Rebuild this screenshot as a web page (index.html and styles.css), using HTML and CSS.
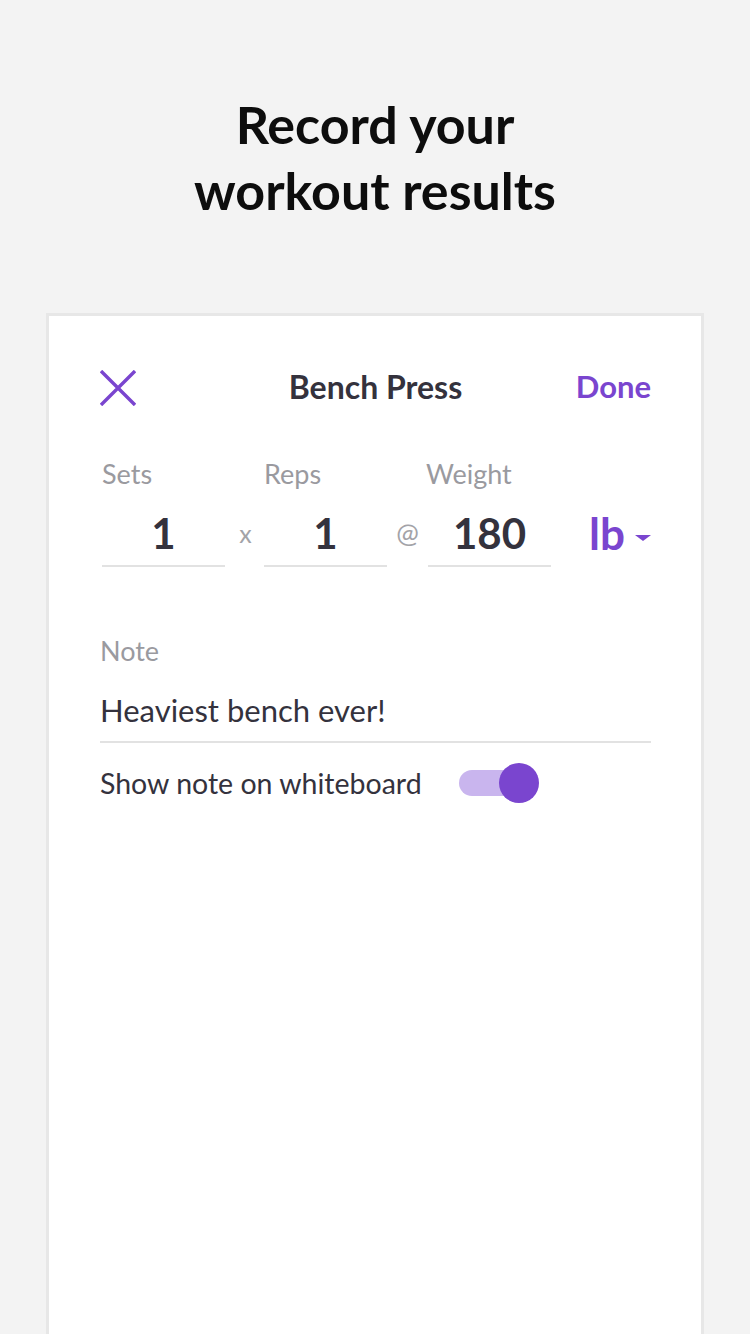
FILE: index.html
```html
<!DOCTYPE html>
<html lang="en">
<head>
<meta charset="utf-8">
<title>Record your workout results</title>
<link rel="stylesheet" href="styles.css">
</head>
<body>
<main class="screen">
  <h1 class="headline">Record your<br>workout results</h1>
  <section class="card">
    <header class="card-header">
      <button class="icon-btn" aria-label="Close">
        <svg width="36" height="36" viewBox="0 0 36 36"><path d="M1 1 L35 35 M35 1 L1 35" stroke="#7a45cf" stroke-width="3.4" fill="none"/></svg>
      </button>
      <div class="card-title">Bench Press</div>
      <button class="done-btn">Done</button>
    </header>

    <div class="fields">
      <div class="field-label">Sets</div>
      <div></div>
      <div class="field-label">Reps</div>
      <div></div>
      <div class="field-label weight-label">Weight</div>
      <div></div>

      <div class="field-value">1</div>
      <div class="sep sep-x">x</div>
      <div class="field-value">1</div>
      <div class="sep sep-at">@</div>
      <div class="field-value">180</div>
      <div class="unit">lb<span class="caret"></span></div>
    </div>

    <div class="note-label">Note</div>
    <div class="note-text">Heaviest bench ever!</div>

    <div class="switch-row">
      <span class="switch-label">Show note on whiteboard</span>
      <span class="switch"><span class="switch-knob"></span></span>
    </div>
  </section>
</main>
</body>
</html>
```

FILE: styles.css
```css
html, body {
  margin: 0;
  padding: 0;
}
body {
  background: #f3f3f3;
  font-family: "Lato", "Noto Sans", sans-serif;
  color: #34323d;
}
.screen {
  width: 750px;
  height: 1334px;
  overflow: hidden;
  display: flex;
  flex-direction: column;
  align-items: center;
}
.headline {
  margin: 91px 0 0;
  font-size: 52px;
  line-height: 66px;
  font-weight: 700;
  color: #0d0d0d;
  text-align: center;
}
.card {
  margin-top: 90px;
  width: 658px;
  box-sizing: border-box;
  flex: 1;
  background: #fff;
  border: 3px solid #e7e7e7;
  border-bottom: none;
  padding: 50px 50px 0 51px;
}
.card-header {
  height: 44px;
  display: grid;
  grid-template-columns: 1fr auto 1fr;
  align-items: center;
}
.icon-btn {
  justify-self: start;
  background: none;
  border: 0;
  padding: 0;
  width: 36px;
  height: 36px;
  display: flex;
}
.card-title {
  font-size: 32px;
  font-weight: 700;
  color: #34323d;
  margin-bottom: 4px;
}
.done-btn {
  justify-self: end;
  background: none;
  border: 0;
  padding: 0;
  font-family: inherit;
  font-size: 31px;
  font-weight: 700;
  color: #7a45cf;
  margin-bottom: 4px;
}
.fields {
  margin-top: 49px;
  padding-left: 2px;
  display: grid;
  grid-template-columns: 123px 39px 123px 41px 123px 1fr;
  row-gap: 20px;
}
.field-label {
  font-size: 27px;
  line-height: 30px;
  color: #9a9a9f;
}
.weight-label {
  margin-left: -2px;
}
.field-value {
  font-size: 42px;
  line-height: 48px;
  font-weight: 700;
  text-align: center;
  color: #34323d;
  padding-bottom: 8px;
  border-bottom: 2px solid #e2e2e2;
}
.sep {
  text-align: center;
  color: #a3a3a8;
  line-height: 48px;
}
.sep-x {
  font-size: 25px;
  padding-left: 2px;
}
.sep-at {
  font-size: 27px;
}
.unit {
  justify-self: end;
  display: flex;
  align-items: center;
  font-size: 44px;
  line-height: 48px;
  height: 48px;
  font-weight: 700;
  color: #7a45cf;
  margin-top: 0;
}
.caret {
  margin-left: 10px;
  margin-top: 10px;
  width: 0;
  height: 0;
  border-left: 8px solid transparent;
  border-right: 8px solid transparent;
  border-top: 6px solid #7a45cf;
}
.note-label {
  margin-top: 69px;
  font-size: 27px;
  line-height: 30px;
  color: #9a9a9f;
}
.note-text {
  margin-top: 22px;
  font-size: 31px;
  line-height: 44px;
  color: #34323d;
  padding-bottom: 9px;
  border-bottom: 2px solid #e2e2e2;
}
.switch-row {
  margin-top: 18px;
  height: 44px;
  display: flex;
  align-items: center;
}
.switch-label {
  font-size: 28.5px;
  color: #34323d;
}
.switch {
  position: relative;
  margin-left: 37px;
  width: 72px;
  height: 26px;
  border-radius: 13px;
  background: #c9b5ee;
}
.switch-knob {
  position: absolute;
  right: -8px;
  top: -7px;
  width: 40px;
  height: 40px;
  border-radius: 50%;
  background: #7a45cf;
}
```
